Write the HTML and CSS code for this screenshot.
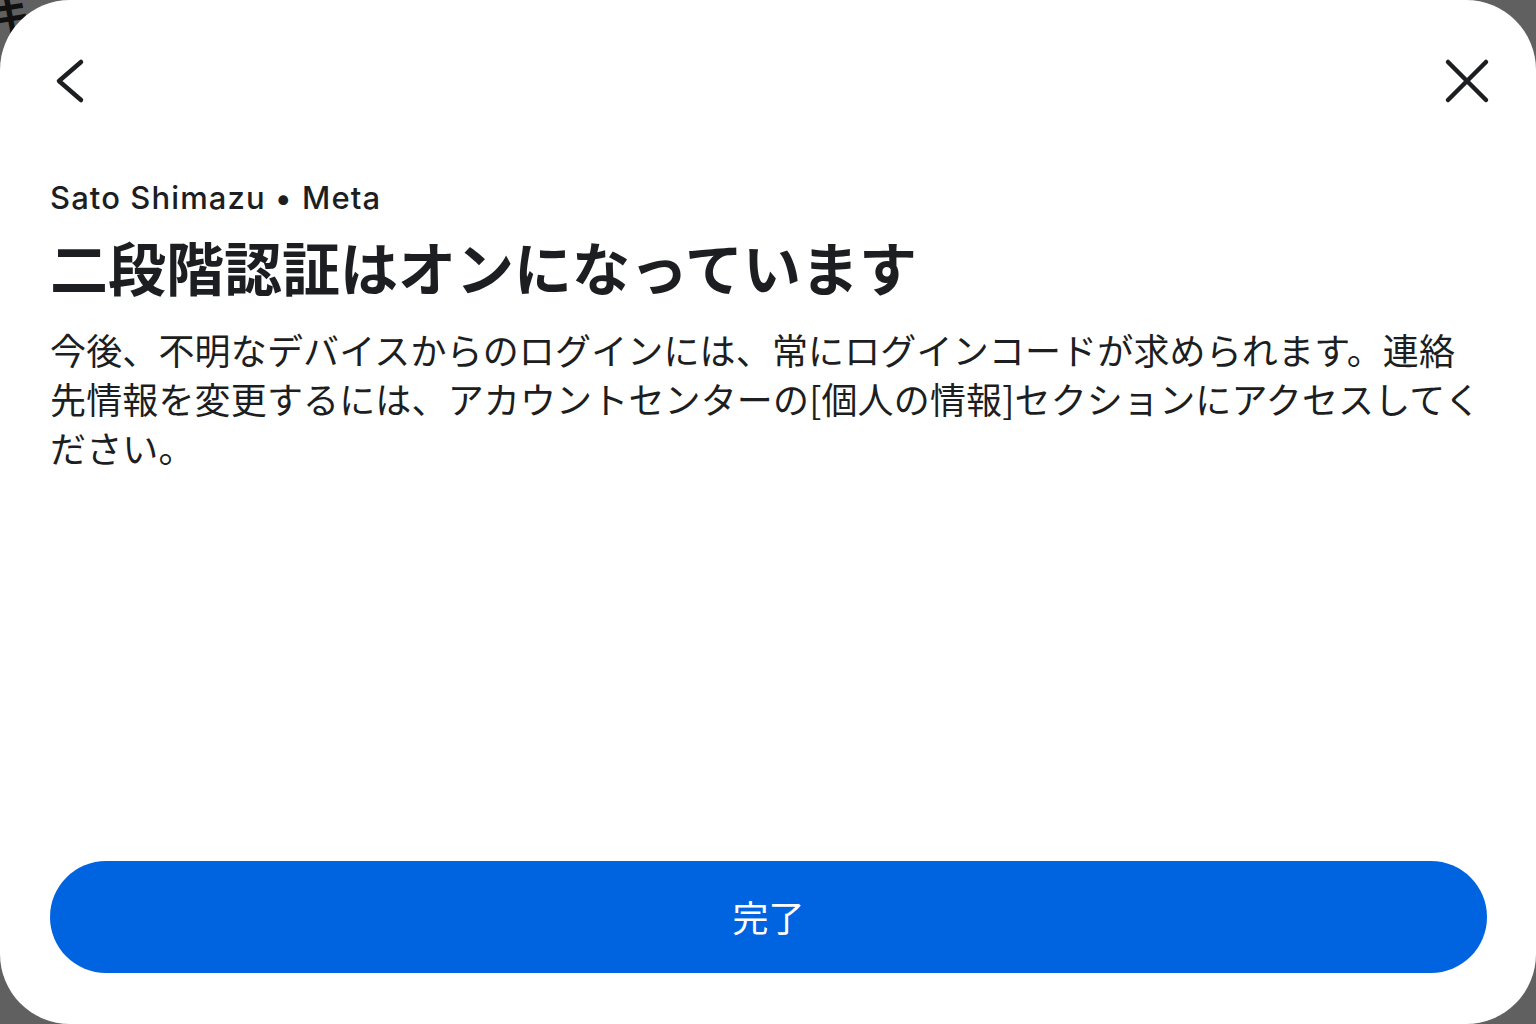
FILE: index.html
```html
<!DOCTYPE html>
<html lang="ja">
<head>
    <meta charset="UTF-8">
    <meta name="viewport" content="width=device-width, initial-scale=1.0">
    <title>二段階認証</title>
    <link rel="stylesheet" href="styles.css">
</head>
<body>
    <span class="behind">キ</span>
    <div class="sheet">
        <div class="topbar">
            <button class="icon-btn" aria-label="戻る">
                <svg width="48" height="48" viewBox="0 0 48 48">
                    <polyline points="34,5 12,24 34,43" fill="none" stroke="#1c1e21" stroke-width="4.5" stroke-linecap="round" stroke-linejoin="round"/>
                </svg>
            </button>
            <button class="icon-btn" aria-label="閉じる">
                <svg width="48" height="48" viewBox="0 0 48 48">
                    <line x1="5" y1="5" x2="43" y2="43" stroke="#1c1e21" stroke-width="4.5" stroke-linecap="round"/>
                    <line x1="43" y1="5" x2="5" y2="43" stroke="#1c1e21" stroke-width="4.5" stroke-linecap="round"/>
                </svg>
            </button>
        </div>

        <div class="content">
            <p class="account">Sato Shimazu • Meta</p>
            <h1 class="title">二段階認証はオンになっています</h1>
            <p class="desc">今後、不明なデバイスからのログインには、常にログインコードが求められます。連絡先情報を変更するには、アカウントセンターの[個人の情報]セクションにアクセスしてください。</p>
        </div>

        <button class="done">完了</button>
    </div>
</body>
</html>
```

FILE: styles.css
```css
html, body {
    margin: 0;
    height: 100%;
}
body {
    background-color: #606060;
    font-family: "Noto Sans CJK JP", "Noto Sans", sans-serif;
    color: #1c1e21;
    overflow: hidden;
    position: relative;
}
.behind {
    position: absolute;
    left: -10px;
    top: -16px;
    font-size: 40px;
    font-weight: 700;
    color: #111;
}
.sheet {
    position: relative;
    box-sizing: border-box;
    height: 1024px;
    background-color: #fff;
    border-radius: 70px;
    display: flex;
    flex-direction: column;
    padding: 0 49px 51px 50px;
}
.topbar {
    display: flex;
    justify-content: space-between;
    align-items: center;
    padding-top: 57px;
}
.icon-btn {
    width: 48px;
    height: 48px;
    padding: 0;
    border: none;
    background: none;
    cursor: pointer;
}
.icon-btn:first-child {
    margin-left: -3px;
}
.icon-btn:last-child {
    margin-right: -4px;
}
.content {
    padding-top: 75px;
}
.account {
    margin: 0;
    font-family: Inter, "Noto Sans", sans-serif;
    font-size: 31px;
    line-height: 36px;
    font-weight: 500;
    letter-spacing: 1.1px;
}
.title {
    margin: 14px 0 0;
    font-size: 58px;
    line-height: 72px;
    font-weight: 700;
}
.desc {
    margin: 23px 0 0;
    font-size: 36px;
    line-height: 49px;
    letter-spacing: 0.15px;
    width: 1435px;
}
.done {
    margin-top: auto;
    height: 112px;
    padding-bottom: 4px;
    border: none;
    border-radius: 56px;
    background-color: #0064e0;
    color: #fff;
    font-family: "Noto Sans CJK JP", sans-serif;
    font-size: 36px;
    cursor: pointer;
}
```
